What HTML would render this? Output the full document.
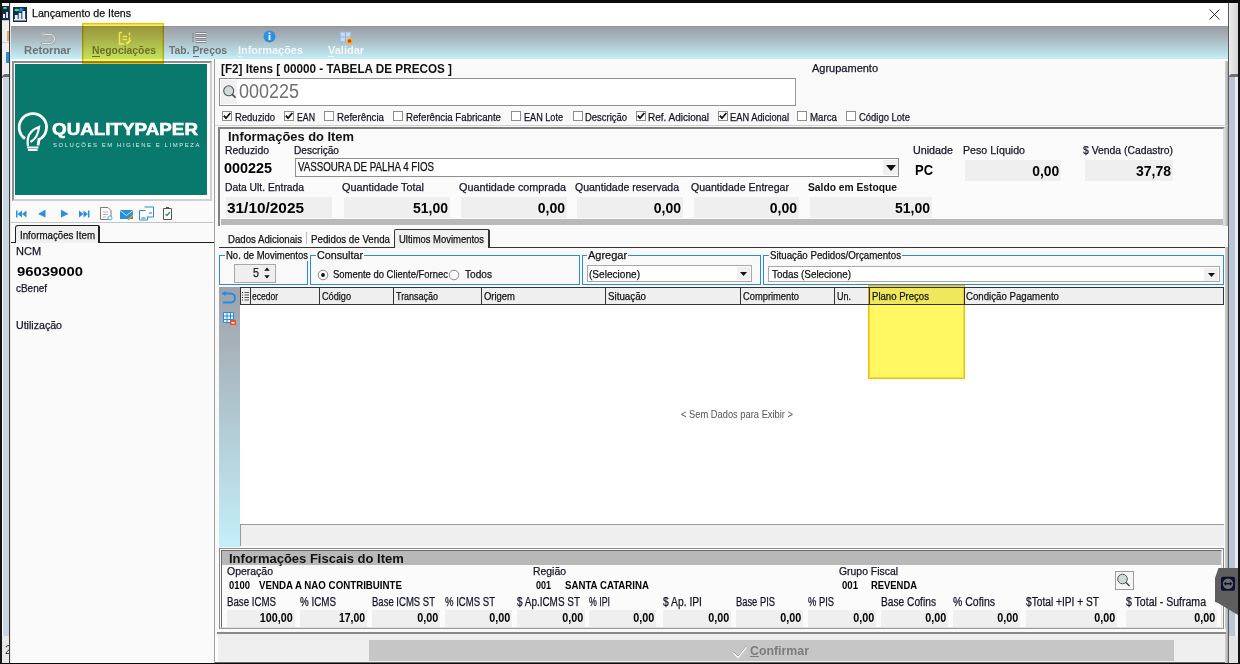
<!DOCTYPE html>
<html><head><meta charset="utf-8">
<style>
*{margin:0;padding:0;box-sizing:border-box}
html,body{width:1240px;height:664px;overflow:hidden;background:#fafafa;font-family:"Liberation Sans",sans-serif;font-size:11px}
.a{position:absolute;white-space:pre}
.s{-webkit-text-stroke:0.25px currentColor}
svg.a{overflow:visible}
</style></head><body>
<div class="a" style="left:0px;top:0px;width:1240px;height:664px;background:#f9f9f9;"></div>
<div class="a" style="left:0px;top:0px;width:1240px;height:3px;background:#0b0b0b;"></div>
<div class="a" style="left:0px;top:662px;width:1240px;height:1px;background:#6a6a6a;"></div>
<div class="a" style="left:0px;top:663px;width:1240px;height:1px;background:#0b0b0b;"></div>
<div class="a" style="left:0px;top:3px;width:2px;height:660px;background:#151515;"></div>
<div class="a" style="left:2px;top:3px;width:7px;height:72px;background:#eeeeee;"></div>
<div class="a" style="left:11px;top:661px;width:1217px;height:1px;background:#fdfdfd;"></div>
<svg class="a" style="left:2px;top:6px" width="7" height="14"><rect width="7" height="14" fill="#0d2d57"/><ellipse cx="3" cy="2" rx="2" ry="1" fill="#6fdc2c"/><rect x="1" y="8" width="2" height="4" fill="#eef"/><rect x="4" y="6" width="2" height="6" fill="#dde"/></svg>
<div class="a" style="left:2px;top:20px;width:7px;height:1px;background:#c8c8c8;"></div>
<div class="a" style="left:7px;top:31px;width:2px;height:10px;background:#e0a860;"></div>
<div class="a" style="left:2px;top:42px;width:7px;height:1px;background:#d0d0d0;"></div>
<div class="a" style="left:6px;top:52px;width:3px;height:11px;background:#2a8ad8;"></div>
<div class="a" style="left:2px;top:74px;width:7px;height:4px;background:#6a6a6a;border-top-left-radius:4px"></div>
<div class="a" style="left:3px;top:77px;width:6px;height:559px;background:#c9d5e1;"></div>
<div class="a" style="left:2px;top:636px;width:7px;height:27px;background:#e8e8e8;"></div>
<div class="a" style="left:5px;top:643px;font-size:12px;line-height:14px;color:#445">2</div>
<div class="a" style="left:9px;top:3px;width:1px;height:660px;background:#3a3a3a;"></div>
<div class="a" style="left:10px;top:3px;width:1px;height:660px;background:#e8e8e8;"></div>
<div class="a" style="left:1225px;top:59px;width:3px;height:604px;background:linear-gradient(90deg,#d6d6d6,#a8a8a8);"></div>
<div class="a" style="left:1228px;top:3px;width:1px;height:660px;background:#5a5a5a;"></div>
<div class="a" style="left:1229px;top:3px;width:9px;height:71px;background:linear-gradient(90deg,#ececec,#d6d6d6);"></div>
<div class="a" style="left:1229px;top:74px;width:9px;height:3px;background:#707070;border-top-left-radius:3px"></div>
<div class="a" style="left:1229px;top:77px;width:6px;height:559px;background:#b8c6d6;"></div>
<div class="a" style="left:1235px;top:77px;width:3px;height:559px;background:#e9edf1;"></div>
<div class="a" style="left:1229px;top:636px;width:9px;height:27px;background:#e4e4e4;"></div>
<div class="a" style="left:1238px;top:3px;width:2px;height:660px;background:#111;"></div>
<div class="a" style="left:11px;top:3px;width:1217px;height:24px;background:#ffffff;"></div>
<svg class="a" style="left:13px;top:7px" width="14" height="15" viewBox="0 0 15 15" preserveAspectRatio="none"><rect width="15" height="15" fill="#0d2d57"/><rect x="1" y="12" width="13" height="1.5" fill="#e8eef5"/><rect x="2" y="8" width="3" height="4" fill="#f3f6fa"/><rect x="6" y="6" width="3" height="6" fill="#dfe6ee"/><rect x="10" y="4" width="3" height="8" fill="#f3f6fa"/><ellipse cx="4" cy="3" rx="2.5" ry="1.2" fill="#6fdc2c"/><path d="M6 4 L9 1 L8 4 L11 2" stroke="#1e8cf0" stroke-width="1.6" fill="none"/></svg>
<svg class="a" style="left:1209px;top:9px" width="11" height="11"><path d="M0.5 0.5L10.5 10.5M10.5 0.5L0.5 10.5" stroke="#1a1a1a" stroke-width="0.9"/></svg>
<div class="a" style="left:11px;top:26px;width:1217px;height:33px;background:linear-gradient(#8f9197,#9b9ea5 4%,#a9b9c0 40%,#c3eff9);"></div>
<div class="a" style="left:11px;top:59px;width:1217px;height:2px;background:#ffffff;"></div>
<div class="a" style="left:92px;top:56px;width:8px;height:1px;background:#717171;"></div>
<div class="a" style="left:193px;top:56px;width:6px;height:1px;background:#717171;"></div>
<div class="a" style="left:238px;top:56px;width:4px;height:1px;background:#f2f7fa;"></div>
<div class="a" style="left:328px;top:56px;width:6px;height:1px;background:#f2f7fa;"></div>
<svg class="a" style="left:39px;top:31px" width="17" height="15" viewBox="0 0 17 15"><path d="M5 3.5 H11 A4.5 4.5 0 0 1 11 12.5 H2" stroke="#a8a8a8" stroke-width="2.8" fill="none"/><path d="M5 3.5 H11 A4.5 4.5 0 0 1 11 12.5 H3" stroke="#e6e6e6" stroke-width="1" fill="none"/><path d="M1 3.5 L5.5 0.5 V6.5Z" fill="#b8b8b8"/></svg>
<svg class="a" style="left:118px;top:31px" width="15" height="15" viewBox="0 0 15 15"><path d="M1.5 1.5 V13 H6 M1.5 1.5 H4" stroke="#f6f4c0" stroke-width="1.5" fill="none"/><path d="M4.5 5.5 H9 M4.5 8.5 H9 M11.5 1.5 V4.5 M11.5 6 V9" stroke="#f6f4c0" stroke-width="1.4" fill="none"/><path d="M8.5 13 L12.5 9" stroke="#f6f4c0" stroke-width="2"/></svg>
<svg class="a" style="left:191px;top:32px" width="17" height="12" viewBox="0 0 17 12"><path d="M4.5 1.5 H15.5 M4.5 5.5 H15.5 M4.5 9.5 H15.5" stroke="#777" stroke-width="2.6" fill="none"/><path d="M4.5 1.5 H15.5 M4.5 5.5 H15.5 M4.5 9.5 H15.5" stroke="#f0f0f0" stroke-width="1.2" fill="none"/><path d="M2 1 V10 M1 1.5 H2.5 M1 5.5 H2.5 M1 9.5 H2.5" stroke="#888" stroke-width="0.8"/></svg>
<svg class="a" style="left:263px;top:30px" width="13" height="13" viewBox="0 0 13 13"><circle cx="6.5" cy="6.5" r="6" fill="#2d8fe4"/><rect x="5.6" y="5" width="1.8" height="5" fill="#fff"/><rect x="5.6" y="2.5" width="1.8" height="1.6" fill="#fff"/></svg>
<svg class="a" style="left:339px;top:31px" width="15" height="14" viewBox="0 0 15 14"><path d="M1 1 H12 V11 H1Z M1 6 H12 M6.5 1 V11" stroke="#8fb8e0" stroke-width="1.2" fill="#c9d9ea"/><circle cx="10.5" cy="10" r="3" fill="#f5b800"/><circle cx="10.5" cy="10" r="1.8" fill="#e23a2a"/></svg>
<div class="a" style="left:11px;top:61px;width:203px;height:602px;background:#fafafa;"></div>
<div class="a" style="left:12px;top:61px;width:200px;height:140px;background:#ffffff;border:2px solid #8e8e8e;border-right-color:#cfcfcf;border-bottom-color:#cfcfcf;box-sizing:border-box"></div>
<div class="a" style="left:15px;top:64px;width:192px;height:131px;background:#0a796d;"></div>
<svg class="a" style="left:14px;top:110px" width="40" height="46" viewBox="0 0 40 46"><path d="M11 28.5 A13.7 13.7 0 1 1 25 29.5 L24 35.5" stroke="#fff" stroke-width="2.8" fill="none"/><path d="M14 36 Q11.5 22 25 17 Q24 28 16.5 32" stroke="#fff" stroke-width="2.3" fill="none"/><path d="M13 37.5 H24.5 M14 40 H23.5" stroke="#fff" stroke-width="1.8"/></svg>
<div class="a" style="left:214px;top:59px;width:1px;height:604px;background:#a0a0a0;"></div>
<svg class="a" style="left:15px;top:209px" width="160" height="12" viewBox="0 0 160 12"><path d="M1 1.5 H2.5 V8.5 H1Z M2.5 5 L7 1.5 V8.5Z M7 5 L11.5 1.5 V8.5Z" fill="#2f8fdc"/><path d="M23 5 L30.5 0.5 V8.5Z" fill="#2f8fdc"/><path d="M46 0.5 L53.5 5 L46 8.5Z" fill="#2f8fdc"/><path d="M64 1.5 L68.5 5 L64 8.5Z M68.5 1.5 L73 5 L68.5 8.5Z M73 1.5 H74.5 V8.5 H73Z" fill="#2f8fdc"/></svg>
<svg class="a" style="left:99px;top:206px" width="75" height="15" viewBox="0 0 75 15"><path d="M1.5 1.5 H9 L12 4.5 V13.5 H1.5Z" stroke="#7a7a7a" fill="#fbfbfb" stroke-width="1"/><path d="M4 6 H9 M4 8.5 H9 M4 11 H7" stroke="#b8b8b8"/><circle cx="11" cy="12" r="2" fill="#fff" stroke="#58a8e8"/><path d="M21 4 H34 V13 H21Z" fill="#2a8ed8"/><path d="M21 4.5 L27.5 9.5 L34 4.5" stroke="#cfe6fa" fill="none"/><path d="M29 14 L34 9" stroke="#e3a41c" stroke-width="1.6"/><path d="M40.5 4.5 H48.5 V14 H40.5Z" stroke="#2a8ad8" fill="#fff"/><path d="M45.5 1 H54.5 V11 H48.5" stroke="#2a8ad8" fill="#fff"/><path d="M42.5 12 H46.5 M50 7 H53" stroke="#2a6ab8"/><path d="M64.5 2.5 H72.5 V13.5 H64.5Z" stroke="#555" fill="#fff"/><rect x="67" y="1" width="3" height="2" fill="#555"/><path d="M66.5 8 L68 9.5 L71 6" stroke="#2a9a3a" fill="none" stroke-width="1.3"/></svg>
<div class="a" style="left:11px;top:222px;width:202px;height:1px;background:#c4c4c4;"></div>
<div class="a" style="left:15px;top:225px;width:85px;height:18px;background:#f0f0f0;border:1px solid #1e1e1e;border-bottom:none;border-right-width:2px;border-radius:3px 2px 0 0"></div>
<div class="a" style="left:11px;top:242px;width:5px;height:1px;background:#1e1e1e;"></div>
<div class="a" style="left:99px;top:242px;width:115px;height:1px;background:#1e1e1e;"></div>
<div class="a" style="left:219px;top:78px;width:577px;height:28px;background:#ffffff;border:1px solid #8f8f8f;border-right-color:#9a9a9a"></div>
<div class="a" style="left:221px;top:80px;width:16px;height:24px;background:#f0f0f0;"></div>
<svg class="a" style="left:220px;top:82px" width="18" height="18" viewBox="0 0 18 18"><circle cx="8.7" cy="8.8" r="5" stroke="#555" stroke-width="1.1" fill="#cfdada"/><path d="M12.3 12.4 L15.5 15.6" stroke="#444" stroke-width="1.5"/></svg>
<div class="a" style="left:222px;top:111px;width:10px;height:10px;background:#ffffff;border:1px solid #8d8d8d"></div>
<svg class="a" style="left:222px;top:111px" width="10" height="10" viewBox="0 0 10 10"><path d="M1.8 4.6 L4 7.2 L8.3 2" stroke="#111" stroke-width="1.8" fill="none"/></svg>
<div class="a" style="left:284px;top:111px;width:10px;height:10px;background:#ffffff;border:1px solid #8d8d8d"></div>
<svg class="a" style="left:284px;top:111px" width="10" height="10" viewBox="0 0 10 10"><path d="M1.8 4.6 L4 7.2 L8.3 2" stroke="#111" stroke-width="1.8" fill="none"/></svg>
<div class="a" style="left:324px;top:111px;width:10px;height:10px;background:#ffffff;border:1px solid #8d8d8d"></div>
<div class="a" style="left:393px;top:111px;width:10px;height:10px;background:#ffffff;border:1px solid #8d8d8d"></div>
<div class="a" style="left:511px;top:111px;width:10px;height:10px;background:#ffffff;border:1px solid #8d8d8d"></div>
<div class="a" style="left:573px;top:111px;width:10px;height:10px;background:#ffffff;border:1px solid #8d8d8d"></div>
<div class="a" style="left:636px;top:111px;width:10px;height:10px;background:#ffffff;border:1px solid #8d8d8d"></div>
<svg class="a" style="left:636px;top:111px" width="10" height="10" viewBox="0 0 10 10"><path d="M1.8 4.6 L4 7.2 L8.3 2" stroke="#111" stroke-width="1.8" fill="none"/></svg>
<div class="a" style="left:718px;top:111px;width:10px;height:10px;background:#ffffff;border:1px solid #8d8d8d"></div>
<svg class="a" style="left:718px;top:111px" width="10" height="10" viewBox="0 0 10 10"><path d="M1.8 4.6 L4 7.2 L8.3 2" stroke="#111" stroke-width="1.8" fill="none"/></svg>
<div class="a" style="left:797px;top:111px;width:10px;height:10px;background:#ffffff;border:1px solid #8d8d8d"></div>
<div class="a" style="left:846px;top:111px;width:10px;height:10px;background:#ffffff;border:1px solid #8d8d8d"></div>
<div class="a" style="left:215px;top:125px;width:1013px;height:1px;background:#d0d0d0;"></div>
<div class="a" style="left:218px;top:127px;width:1007px;height:100px;background:#fbfbfb;border:2px solid #808080;border-right-color:#dcdcdc;border-bottom:none"></div>
<div class="a" style="left:295px;top:158px;width:604px;height:19px;background:#ffffff;border:1px solid #8f8f8f"></div>
<div class="a" style="left:883px;top:160px;width:15px;height:15px;background:#f0f0f0;"></div>
<svg class="a" style="left:886px;top:165px" width="10" height="6"><path d="M0 0 H10 L5 6Z" fill="#111"/></svg>
<div class="a" style="left:965px;top:160px;width:96px;height:21px;background:#efefef;"></div>
<div class="a" style="left:1085px;top:160px;width:88px;height:21px;background:#efefef;"></div>
<div class="a" style="left:226px;top:197px;width:106px;height:21px;background:#efefef;"></div>
<div class="a" style="left:344px;top:197px;width:106px;height:21px;background:#efefef;"></div>
<div class="a" style="left:461px;top:197px;width:106px;height:21px;background:#efefef;"></div>
<div class="a" style="left:577px;top:197px;width:106px;height:21px;background:#efefef;"></div>
<div class="a" style="left:694px;top:197px;width:105px;height:21px;background:#efefef;"></div>
<div class="a" style="left:810px;top:197px;width:122px;height:21px;background:#efefef;"></div>
<div class="a" style="left:221px;top:219px;width:1002px;height:6px;background:#b9b9b9;"></div>
<div class="a" style="left:215px;top:226px;width:1013px;height:21px;background:#fafafa;"></div>
<div class="a" style="left:306px;top:232px;width:1px;height:12px;background:#bdbdbd;"></div>
<div class="a" style="left:394px;top:229px;width:96px;height:19px;background:#f0f0f0;border:1px solid #333;border-bottom:none;border-right:2px solid #333;border-radius:2px 2px 0 0"></div>
<div class="a" style="left:219px;top:247px;width:176px;height:1px;background:#333;"></div>
<div class="a" style="left:489px;top:247px;width:736px;height:1px;background:#333;"></div>
<div class="a" style="left:219px;top:255px;width:89px;height:30px;background:transparent;border:1px solid #2b89e4"></div>
<div class="a" style="left:225px;top:249px;width:84px;height:12px;background:#fafafa;"></div>
<div class="a" style="left:310px;top:255px;width:270px;height:30px;background:transparent;border:1px solid #2b89e4"></div>
<div class="a" style="left:316px;top:249px;width:48px;height:12px;background:#fafafa;"></div>
<div class="a" style="left:582px;top:255px;width:179px;height:30px;background:transparent;border:1px solid #2b89e4"></div>
<div class="a" style="left:587px;top:249px;width:41px;height:12px;background:#fafafa;"></div>
<div class="a" style="left:763px;top:255px;width:461px;height:30px;background:transparent;border:1px solid #2b89e4"></div>
<div class="a" style="left:769px;top:249px;width:133px;height:12px;background:#fafafa;"></div>
<div class="a" style="left:234px;top:264px;width:42px;height:19px;background:#efefef;border:1px solid #a9a9a9"></div>
<svg class="a" style="left:264px;top:267px" width="6" height="12"><path d="M0.3 3.8 L3 0.6 L5.7 3.8Z M0.3 8.3 L3 11.5 L5.7 8.3Z" fill="#111"/></svg>
<svg class="a" style="left:316.5px;top:268.5px" width="12" height="12"><circle cx="6" cy="6" r="4.8" fill="#fbfbfb" stroke="#8a8a8a"/><circle cx="6" cy="6" r="1.9" fill="#111"/></svg>
<svg class="a" style="left:447.5px;top:268.5px" width="12" height="12"><circle cx="6" cy="6" r="4.8" fill="#fbfbfb" stroke="#8a8a8a"/></svg>
<div class="a" style="left:587px;top:265px;width:165px;height:17px;background:#ffffff;border:1px solid #a9a9a9"></div>
<div class="a" style="left:737px;top:267px;width:13px;height:13px;background:#efefef;"></div>
<svg class="a" style="left:740px;top:272px" width="7" height="4"><path d="M0 0 H7 L3.5 4Z" fill="#111"/></svg>
<div class="a" style="left:768px;top:266px;width:452px;height:16px;background:#ffffff;border:1px solid #a9a9a9"></div>
<div class="a" style="left:1204px;top:268px;width:14px;height:13px;background:#efefef;"></div>
<svg class="a" style="left:1208px;top:273px" width="7" height="4"><path d="M0 0 H7 L3.5 4Z" fill="#111"/></svg>
<div class="a" style="left:219px;top:287px;width:21px;height:260px;background:linear-gradient(#9ea1a8,#c3eff9);"></div>
<div class="a" style="left:240px;top:287px;width:984px;height:18px;background:#efefef;border-top:1px solid #333;border-bottom:1px solid #333"></div>
<div class="a" style="left:240px;top:305px;width:984px;height:219px;background:#ffffff;"></div>
<div class="a" style="left:240px;top:524px;width:984px;height:22px;background:#efefef;border-top:1px solid #9a9a9a;border-left:1px solid #9a9a9a"></div>
<div class="a" style="left:240px;top:288px;width:1px;height:16px;background:#333;"></div>
<div class="a" style="left:250px;top:288px;width:1px;height:16px;background:#333;"></div>
<div class="a" style="left:319px;top:288px;width:1px;height:16px;background:#333;"></div>
<div class="a" style="left:393px;top:288px;width:1px;height:16px;background:#333;"></div>
<div class="a" style="left:481px;top:288px;width:1px;height:16px;background:#333;"></div>
<div class="a" style="left:605px;top:288px;width:1px;height:16px;background:#333;"></div>
<div class="a" style="left:740px;top:288px;width:1px;height:16px;background:#333;"></div>
<div class="a" style="left:834px;top:288px;width:1px;height:16px;background:#333;"></div>
<div class="a" style="left:869px;top:288px;width:1px;height:16px;background:#333;"></div>
<div class="a" style="left:964px;top:288px;width:1px;height:16px;background:#333;"></div>
<div class="a" style="left:1223px;top:288px;width:1px;height:16px;background:#333;"></div>
<svg class="a" style="left:242px;top:291px" width="8" height="10"><path d="M0 1.5 H1 M0 4 H1 M0 6.5 H1 M0 9 H1" stroke="#222"/><path d="M2.5 1.5 H7 M2.5 4 H7 M2.5 6.5 H7 M2.5 9 H7" stroke="#555"/></svg>
<svg class="a" style="left:221px;top:291px" width="15" height="13" viewBox="0 0 15 13"><path d="M4 2.5 H9.5 A4.5 4.5 0 0 1 9.5 11.5 H2" stroke="#1a8fea" stroke-width="2" fill="none"/><path d="M0.5 2.5 L4.5 0 V5Z" fill="#1a8fea"/></svg>
<svg class="a" style="left:223px;top:312px" width="14" height="14" viewBox="0 0 14 14"><path d="M0.5 0.5 H10.5 V10.5 H0.5Z M0.5 4 H10.5 M0.5 7.5 H10.5 M4 0.5 V10.5 M7.5 0.5 V10.5" stroke="#2a8ae0" fill="#eaf4fc"/><rect x="7" y="8" width="6" height="5" fill="#e8502a"/><rect x="8.5" y="10" width="3" height="1.5" fill="#fff"/></svg>
<div class="a" style="left:219px;top:548px;width:1005px;height:81px;background:#fbfbfb;border:1px solid #8a8a8a;border-bottom-color:#9a9a9a"></div>
<div class="a" style="left:221px;top:550px;width:1001px;height:78px;background:transparent;border:1px solid #6a6a6a;border-right-color:#e0e0e0;border-bottom-color:#e0e0e0"></div>
<div class="a" style="left:222px;top:551px;width:999px;height:14px;background:#b8b8b8;"></div>
<div class="a" style="left:1115px;top:571px;width:19px;height:19px;background:#f6f6f6;border:1px solid #9c9c9c"></div>
<svg class="a" style="left:1115px;top:571px" width="19" height="19" viewBox="0 0 19 19"><circle cx="7.5" cy="8" r="4.8" stroke="#555" stroke-width="1" fill="#cfdada"/><path d="M11 11.5 L14.5 15" stroke="#444" stroke-width="1.4"/></svg>
<div class="a" style="left:227px;top:610px;width:68px;height:17px;background:#efefef;"></div>
<div class="a" style="left:300px;top:610px;width:67px;height:17px;background:#efefef;"></div>
<div class="a" style="left:372px;top:610px;width:68px;height:17px;background:#efefef;"></div>
<div class="a" style="left:445px;top:610px;width:67px;height:17px;background:#efefef;"></div>
<div class="a" style="left:517px;top:610px;width:68px;height:17px;background:#efefef;"></div>
<div class="a" style="left:589px;top:610px;width:67px;height:17px;background:#efefef;"></div>
<div class="a" style="left:663px;top:610px;width:68px;height:17px;background:#efefef;"></div>
<div class="a" style="left:736px;top:610px;width:67px;height:17px;background:#efefef;"></div>
<div class="a" style="left:808px;top:610px;width:68px;height:17px;background:#efefef;"></div>
<div class="a" style="left:881px;top:610px;width:67px;height:17px;background:#efefef;"></div>
<div class="a" style="left:953px;top:610px;width:67px;height:17px;background:#efefef;"></div>
<div class="a" style="left:1026px;top:610px;width:91px;height:17px;background:#efefef;"></div>
<div class="a" style="left:1126px;top:610px;width:91px;height:17px;background:#efefef;"></div>
<div class="a" style="left:217px;top:629px;width:1009px;height:3px;background:#fafafa;"></div>
<div class="a" style="left:217px;top:632px;width:1009px;height:2px;background:#8a8a8a;"></div>
<div class="a" style="left:215px;top:634px;width:3px;height:28px;background:#ffffff;"></div>
<div class="a" style="left:218px;top:634px;width:1007px;height:28px;background:#efefef;"></div>
<div class="a" style="left:369px;top:640px;width:805px;height:21px;background:#c6c6c6;"></div>
<svg class="a" style="left:733px;top:644px" width="14" height="14" viewBox="0 0 14 14"><path d="M1 9 L5 13 L13 3" stroke="#f4f4f4" stroke-width="2.4" fill="none"/><path d="M1 8 L5 12 L13 2" stroke="#9a9a9a" stroke-width="1" fill="none"/></svg>
<div class="a" style="left:750px;top:656px;width:9px;height:1px;background:#7c7c7c;"></div>
<svg class="a" style="left:1215px;top:568px" width="23" height="48" viewBox="0 0 23 48"><path d="M0 10 L3.5 0 H23 V47 L3 35 L0 34Z" fill="#5e5e5e"/><rect x="6" y="8.7" width="14" height="14" rx="2" fill="#0b1030"/><circle cx="13" cy="15.7" r="5.2" fill="#707070"/><path d="M10.5 15.7 H15.5" stroke="#0b1030" stroke-width="1.4"/><path d="M8.6 15.7 L11.2 13.6 V17.8Z M17.4 15.7 L14.8 13.6 V17.8Z" fill="#0b1030"/></svg>
<div class="a s" style="left:32.00px;top:8.49px;font-family:'Liberation Sans',sans-serif;font-size:11px;line-height:11px;color:#111;transform:scaleX(0.9635);transform-origin:left;">Lançamento de Itens</div>
<div class="a" style="left:24.00px;top:45.29px;font-family:'Liberation Sans',sans-serif;font-size:11px;line-height:11px;font-weight:bold;color:#717171;transform:scaleX(1.0252);transform-origin:left;">Retornar</div>
<div class="a" style="left:92.00px;top:45.29px;font-family:'Liberation Sans',sans-serif;font-size:11px;line-height:11px;font-weight:bold;color:#717171;transform:scaleX(0.9429);transform-origin:left;">Negociações</div>
<div class="a" style="left:169.00px;top:45.29px;font-family:'Liberation Sans',sans-serif;font-size:11px;line-height:11px;font-weight:bold;color:#717171;transform:scaleX(0.9424);transform-origin:left;">Tab. Preços</div>
<div class="a" style="left:238.00px;top:45.29px;font-family:'Liberation Sans',sans-serif;font-size:11px;line-height:11px;font-weight:bold;color:#f2f7fa;transform:scaleX(0.9936);transform-origin:left;">Informações</div>
<div class="a" style="left:328.00px;top:45.29px;font-family:'Liberation Sans',sans-serif;font-size:11px;line-height:11px;font-weight:bold;color:#f2f7fa;">Validar</div>
<div class="a" style="left:52.00px;top:120.91px;font-family:'Liberation Sans',sans-serif;font-size:17px;line-height:17px;font-weight:bold;color:#ffffff;transform:scaleX(1.1067);transform-origin:left;-webkit-text-stroke:0.6px #fff;">QUALITYPAPER</div>
<div class="a" style="left:53.00px;top:142.42px;font-family:'Liberation Sans',sans-serif;font-size:6px;line-height:6px;color:#d8ece9;transform:scaleX(0.9882);transform-origin:left;letter-spacing:1.6px;">SOLUÇÕES EM HIGIENE E LIMPEZA</div>
<div class="a s" style="left:20.00px;top:229.69px;font-family:'Liberation Sans',sans-serif;font-size:11px;line-height:11px;color:#111;transform:scaleX(0.8825);transform-origin:left;">Informações Item</div>
<div class="a s" style="left:16.00px;top:245.69px;font-family:'Liberation Sans',sans-serif;font-size:11px;line-height:11px;color:#141428;">NCM</div>
<div class="a" style="left:17.00px;top:264.99px;font-family:'Liberation Sans',sans-serif;font-size:13px;line-height:13px;font-weight:bold;color:#000;transform:scaleX(1.1410);transform-origin:left;">96039000</div>
<div class="a s" style="left:16.00px;top:282.69px;font-family:'Liberation Sans',sans-serif;font-size:11px;line-height:11px;color:#141428;transform:scaleX(0.9051);transform-origin:left;">cBenef</div>
<div class="a s" style="left:16.00px;top:319.69px;font-family:'Liberation Sans',sans-serif;font-size:11px;line-height:11px;color:#141428;transform:scaleX(0.9646);transform-origin:left;">Utilização</div>
<div class="a" style="left:221.00px;top:63.34px;font-family:'Liberation Sans',sans-serif;font-size:12px;line-height:12px;font-weight:bold;color:#111;transform:scaleX(0.9758);transform-origin:left;">[F2] Itens [ 00000 - TABELA DE PRECOS ]</div>
<div class="a s" style="left:812.00px;top:63.19px;font-family:'Liberation Sans',sans-serif;font-size:11px;line-height:11px;color:#141428;">Agrupamento</div>
<div class="a" style="left:239.00px;top:81.44px;font-family:'Liberation Sans',sans-serif;font-size:20.5px;line-height:20.5px;color:#707070;transform:scaleX(0.8769);transform-origin:left;">000225</div>
<div class="a s" style="left:235.00px;top:111.69px;font-family:'Liberation Sans',sans-serif;font-size:11px;line-height:11px;color:#141428;transform:scaleX(0.8605);transform-origin:left;">Reduzido</div>
<div class="a s" style="left:297.00px;top:111.69px;font-family:'Liberation Sans',sans-serif;font-size:11px;line-height:11px;color:#141428;transform:scaleX(0.7956);transform-origin:left;">EAN</div>
<div class="a s" style="left:337.00px;top:111.69px;font-family:'Liberation Sans',sans-serif;font-size:11px;line-height:11px;color:#141428;transform:scaleX(0.8834);transform-origin:left;">Referência</div>
<div class="a s" style="left:406.00px;top:111.69px;font-family:'Liberation Sans',sans-serif;font-size:11px;line-height:11px;color:#141428;transform:scaleX(0.8777);transform-origin:left;">Referência Fabricante</div>
<div class="a s" style="left:524.00px;top:111.69px;font-family:'Liberation Sans',sans-serif;font-size:11px;line-height:11px;color:#141428;transform:scaleX(0.8281);transform-origin:left;">EAN Lote</div>
<div class="a s" style="left:585.00px;top:111.69px;font-family:'Liberation Sans',sans-serif;font-size:11px;line-height:11px;color:#141428;transform:scaleX(0.8588);transform-origin:left;">Descrição</div>
<div class="a s" style="left:648.00px;top:111.69px;font-family:'Liberation Sans',sans-serif;font-size:11px;line-height:11px;color:#141428;transform:scaleX(0.9069);transform-origin:left;">Ref. Adicional</div>
<div class="a s" style="left:730.00px;top:111.69px;font-family:'Liberation Sans',sans-serif;font-size:11px;line-height:11px;color:#141428;transform:scaleX(0.8463);transform-origin:left;">EAN Adicional</div>
<div class="a s" style="left:810.00px;top:111.69px;font-family:'Liberation Sans',sans-serif;font-size:11px;line-height:11px;color:#141428;transform:scaleX(0.8834);transform-origin:left;">Marca</div>
<div class="a s" style="left:859.00px;top:111.69px;font-family:'Liberation Sans',sans-serif;font-size:11px;line-height:11px;color:#141428;transform:scaleX(0.8596);transform-origin:left;">Código Lote</div>
<div class="a" style="left:228.00px;top:129.99px;font-family:'Liberation Sans',sans-serif;font-size:13px;line-height:13px;font-weight:bold;color:#111;transform:scaleX(0.9910);transform-origin:left;">Informações do Item</div>
<div class="a s" style="left:225.00px;top:144.69px;font-family:'Liberation Sans',sans-serif;font-size:11px;line-height:11px;color:#141428;transform:scaleX(0.9466);transform-origin:left;">Reduzido</div>
<div class="a s" style="left:294.00px;top:144.69px;font-family:'Liberation Sans',sans-serif;font-size:11px;line-height:11px;color:#141428;transform:scaleX(0.9201);transform-origin:left;">Descrição</div>
<div class="a" style="left:224.00px;top:161.15px;font-family:'Liberation Sans',sans-serif;font-size:14px;line-height:14px;font-weight:bold;color:#000;transform:scaleX(1.0274);transform-origin:left;">000225</div>
<div class="a s" style="left:298.00px;top:160.84px;font-family:'Liberation Sans',sans-serif;font-size:12px;line-height:12px;color:#111;transform:scaleX(0.8113);transform-origin:left;">VASSOURA DE PALHA 4 FIOS</div>
<div class="a s" style="left:913.00px;top:144.69px;font-family:'Liberation Sans',sans-serif;font-size:11px;line-height:11px;color:#141428;transform:scaleX(0.9760);transform-origin:left;">Unidade</div>
<div class="a s" style="left:963.00px;top:144.69px;font-family:'Liberation Sans',sans-serif;font-size:11px;line-height:11px;color:#141428;transform:scaleX(0.9655);transform-origin:left;">Peso Líquido</div>
<div class="a s" style="left:1083.00px;top:144.69px;font-family:'Liberation Sans',sans-serif;font-size:11px;line-height:11px;color:#141428;transform:scaleX(0.9435);transform-origin:left;">$ Venda (Cadastro)</div>
<div class="a" style="left:915.00px;top:163.15px;font-family:'Liberation Sans',sans-serif;font-size:14px;line-height:14px;font-weight:bold;color:#000;transform:scaleX(0.9253);transform-origin:left;">PC</div>
<div class="a" style="left:1031.75px;top:164.15px;font-family:'Liberation Sans',sans-serif;font-size:14px;line-height:14px;font-weight:bold;color:#000;transform:scaleX(0.9908);transform-origin:right;">0,00</div>
<div class="a" style="left:1135.95px;top:164.15px;font-family:'Liberation Sans',sans-serif;font-size:14px;line-height:14px;font-weight:bold;color:#000;">37,78</div>
<div class="a s" style="left:225.00px;top:181.69px;font-family:'Liberation Sans',sans-serif;font-size:11px;line-height:11px;color:#141428;transform:scaleX(0.9363);transform-origin:left;">Data Ult. Entrada</div>
<div class="a s" style="left:342.00px;top:181.69px;font-family:'Liberation Sans',sans-serif;font-size:11px;line-height:11px;color:#141428;transform:scaleX(0.9881);transform-origin:left;">Quantidade Total</div>
<div class="a s" style="left:459.00px;top:181.69px;font-family:'Liberation Sans',sans-serif;font-size:11px;line-height:11px;color:#141428;transform:scaleX(0.9829);transform-origin:left;">Quantidade comprada</div>
<div class="a s" style="left:575.00px;top:181.69px;font-family:'Liberation Sans',sans-serif;font-size:11px;line-height:11px;color:#141428;transform:scaleX(0.9554);transform-origin:left;">Quantidade reservada</div>
<div class="a s" style="left:691.00px;top:181.69px;font-family:'Liberation Sans',sans-serif;font-size:11px;line-height:11px;color:#141428;transform:scaleX(0.9595);transform-origin:left;">Quantidade Entregar</div>
<div class="a" style="left:808.00px;top:181.69px;font-family:'Liberation Sans',sans-serif;font-size:11px;line-height:11px;font-weight:bold;color:#111;transform:scaleX(0.9333);transform-origin:left;">Saldo em Estoque</div>
<div class="a" style="left:227.00px;top:200.65px;font-family:'Liberation Sans',sans-serif;font-size:14px;line-height:14px;font-weight:bold;color:#000;transform:scaleX(1.0988);transform-origin:left;">31/10/2025</div>
<div class="a" style="left:412.95px;top:200.95px;font-family:'Liberation Sans',sans-serif;font-size:14px;line-height:14px;font-weight:bold;color:#000;">51,00</div>
<div class="a" style="left:537.75px;top:200.95px;font-family:'Liberation Sans',sans-serif;font-size:14px;line-height:14px;font-weight:bold;color:#000;">0,00</div>
<div class="a" style="left:653.75px;top:200.95px;font-family:'Liberation Sans',sans-serif;font-size:14px;line-height:14px;font-weight:bold;color:#000;">0,00</div>
<div class="a" style="left:769.75px;top:200.95px;font-family:'Liberation Sans',sans-serif;font-size:14px;line-height:14px;font-weight:bold;color:#000;">0,00</div>
<div class="a" style="left:894.95px;top:200.95px;font-family:'Liberation Sans',sans-serif;font-size:14px;line-height:14px;font-weight:bold;color:#000;">51,00</div>
<div class="a s" style="left:228.00px;top:233.69px;font-family:'Liberation Sans',sans-serif;font-size:11px;line-height:11px;color:#111;transform:scaleX(0.8769);transform-origin:left;">Dados Adicionais</div>
<div class="a s" style="left:311.00px;top:233.69px;font-family:'Liberation Sans',sans-serif;font-size:11px;line-height:11px;color:#111;transform:scaleX(0.8845);transform-origin:left;">Pedidos de Venda</div>
<div class="a s" style="left:399.00px;top:233.69px;font-family:'Liberation Sans',sans-serif;font-size:11px;line-height:11px;color:#111;transform:scaleX(0.8583);transform-origin:left;">Ultimos Movimentos</div>
<div class="a s" style="left:226.00px;top:249.69px;font-family:'Liberation Sans',sans-serif;font-size:11px;line-height:11px;color:#111;transform:scaleX(0.8653);transform-origin:left;">No. de Movimentos</div>
<div class="a s" style="left:317.00px;top:249.69px;font-family:'Liberation Sans',sans-serif;font-size:11px;line-height:11px;color:#111;transform:scaleX(0.9771);transform-origin:left;">Consultar</div>
<div class="a s" style="left:588.00px;top:249.69px;font-family:'Liberation Sans',sans-serif;font-size:11px;line-height:11px;color:#111;">Agregar</div>
<div class="a s" style="left:770.00px;top:249.69px;font-family:'Liberation Sans',sans-serif;font-size:11px;line-height:11px;color:#111;transform:scaleX(0.8816);transform-origin:left;">Situação Pedidos/Orçamentos</div>
<div class="a s" style="left:253.00px;top:266.84px;font-family:'Liberation Sans',sans-serif;font-size:12px;line-height:12px;color:#222;transform:scaleX(0.8972);transform-origin:left;">5</div>
<div class="a s" style="left:333.00px;top:268.69px;font-family:'Liberation Sans',sans-serif;font-size:11px;line-height:11px;color:#111;transform:scaleX(0.8587);transform-origin:left;">Somente do Cliente/Fornec</div>
<div class="a s" style="left:465.00px;top:268.69px;font-family:'Liberation Sans',sans-serif;font-size:11px;line-height:11px;color:#111;transform:scaleX(0.9196);transform-origin:left;">Todos</div>
<div class="a s" style="left:589.00px;top:268.69px;font-family:'Liberation Sans',sans-serif;font-size:11px;line-height:11px;color:#111;transform:scaleX(0.9166);transform-origin:left;">(Selecione)</div>
<div class="a s" style="left:772.00px;top:268.69px;font-family:'Liberation Sans',sans-serif;font-size:11px;line-height:11px;color:#111;transform:scaleX(0.8971);transform-origin:left;">Todas (Selecione)</div>
<div class="a s" style="left:252.00px;top:290.69px;font-family:'Liberation Sans',sans-serif;font-size:11px;line-height:11px;color:#111;transform:scaleX(0.7729);transform-origin:left;">ecedor</div>
<div class="a s" style="left:322.00px;top:290.69px;font-family:'Liberation Sans',sans-serif;font-size:11px;line-height:11px;color:#111;transform:scaleX(0.8319);transform-origin:left;">Código</div>
<div class="a s" style="left:396.00px;top:290.69px;font-family:'Liberation Sans',sans-serif;font-size:11px;line-height:11px;color:#111;transform:scaleX(0.8145);transform-origin:left;">Transação</div>
<div class="a s" style="left:484.00px;top:290.69px;font-family:'Liberation Sans',sans-serif;font-size:11px;line-height:11px;color:#111;transform:scaleX(0.8596);transform-origin:left;">Origem</div>
<div class="a s" style="left:608.00px;top:290.69px;font-family:'Liberation Sans',sans-serif;font-size:11px;line-height:11px;color:#111;transform:scaleX(0.8876);transform-origin:left;">Situação</div>
<div class="a s" style="left:743.00px;top:290.69px;font-family:'Liberation Sans',sans-serif;font-size:11px;line-height:11px;color:#111;transform:scaleX(0.8481);transform-origin:left;">Comprimento</div>
<div class="a s" style="left:837.00px;top:290.69px;font-family:'Liberation Sans',sans-serif;font-size:11px;line-height:11px;color:#111;transform:scaleX(0.8175);transform-origin:left;">Un.</div>
<div class="a s" style="left:872.00px;top:290.69px;font-family:'Liberation Sans',sans-serif;font-size:11px;line-height:11px;color:#111;transform:scaleX(0.8711);transform-origin:left;">Plano Preços</div>
<div class="a s" style="left:966.00px;top:290.69px;font-family:'Liberation Sans',sans-serif;font-size:11px;line-height:11px;color:#111;transform:scaleX(0.8790);transform-origin:left;">Condição Pagamento</div>
<div class="a" style="left:681.00px;top:408.69px;font-family:'Liberation Sans',sans-serif;font-size:11px;line-height:11px;color:#555;transform:scaleX(0.8480);transform-origin:left;">&lt; Sem Dados para Exibir &gt;</div>
<div class="a" style="left:229.00px;top:551.99px;font-family:'Liberation Sans',sans-serif;font-size:13px;line-height:13px;font-weight:bold;color:#111;">Informações Fiscais do Item</div>
<div class="a s" style="left:227.00px;top:565.69px;font-family:'Liberation Sans',sans-serif;font-size:11px;line-height:11px;color:#141428;transform:scaleX(0.9521);transform-origin:left;">Operação</div>
<div class="a s" style="left:533.00px;top:565.69px;font-family:'Liberation Sans',sans-serif;font-size:11px;line-height:11px;color:#141428;transform:scaleX(0.9467);transform-origin:left;">Região</div>
<div class="a s" style="left:839.00px;top:565.69px;font-family:'Liberation Sans',sans-serif;font-size:11px;line-height:11px;color:#141428;transform:scaleX(0.9461);transform-origin:left;">Grupo Fiscal</div>
<div class="a" style="left:229.00px;top:579.69px;font-family:'Liberation Sans',sans-serif;font-size:11px;line-height:11px;font-weight:bold;color:#000;transform:scaleX(0.8577);transform-origin:left;">0100</div>
<div class="a" style="left:259.00px;top:579.69px;font-family:'Liberation Sans',sans-serif;font-size:11px;line-height:11px;font-weight:bold;color:#000;transform:scaleX(0.8830);transform-origin:left;">VENDA A NAO CONTRIBUINTE</div>
<div class="a" style="left:536.00px;top:579.69px;font-family:'Liberation Sans',sans-serif;font-size:11px;line-height:11px;font-weight:bold;color:#000;transform:scaleX(0.8170);transform-origin:left;">001</div>
<div class="a" style="left:564.50px;top:579.69px;font-family:'Liberation Sans',sans-serif;font-size:11px;line-height:11px;font-weight:bold;color:#000;transform:scaleX(0.8793);transform-origin:left;">SANTA CATARINA</div>
<div class="a" style="left:842.00px;top:579.69px;font-family:'Liberation Sans',sans-serif;font-size:11px;line-height:11px;font-weight:bold;color:#000;transform:scaleX(0.8715);transform-origin:left;">001</div>
<div class="a" style="left:871.00px;top:579.69px;font-family:'Liberation Sans',sans-serif;font-size:11px;line-height:11px;font-weight:bold;color:#000;transform:scaleX(0.8551);transform-origin:left;">REVENDA</div>
<div class="a s" style="left:227.00px;top:595.54px;font-family:'Liberation Sans',sans-serif;font-size:12px;line-height:12px;color:#141428;transform:scaleX(0.8074);transform-origin:left;">Base ICMS</div>
<div class="a" style="left:256.30px;top:611.84px;font-family:'Liberation Sans',sans-serif;font-size:12px;line-height:12px;font-weight:bold;color:#000;transform:scaleX(0.8991);transform-origin:right;">100,00</div>
<div class="a s" style="left:300.00px;top:595.54px;font-family:'Liberation Sans',sans-serif;font-size:12px;line-height:12px;color:#141428;transform:scaleX(0.8179);transform-origin:left;">% ICMS</div>
<div class="a" style="left:334.97px;top:611.84px;font-family:'Liberation Sans',sans-serif;font-size:12px;line-height:12px;font-weight:bold;color:#000;transform:scaleX(0.8658);transform-origin:right;">17,00</div>
<div class="a s" style="left:372.00px;top:595.54px;font-family:'Liberation Sans',sans-serif;font-size:12px;line-height:12px;color:#141428;transform:scaleX(0.7939);transform-origin:left;">Base ICMS ST</div>
<div class="a" style="left:414.64px;top:611.84px;font-family:'Liberation Sans',sans-serif;font-size:12px;line-height:12px;font-weight:bold;color:#000;transform:scaleX(0.8990);transform-origin:right;">0,00</div>
<div class="a s" style="left:445.00px;top:595.54px;font-family:'Liberation Sans',sans-serif;font-size:12px;line-height:12px;color:#141428;transform:scaleX(0.7978);transform-origin:left;">% ICMS ST</div>
<div class="a" style="left:486.64px;top:611.84px;font-family:'Liberation Sans',sans-serif;font-size:12px;line-height:12px;font-weight:bold;color:#000;transform:scaleX(0.8990);transform-origin:right;">0,00</div>
<div class="a s" style="left:517.00px;top:595.54px;font-family:'Liberation Sans',sans-serif;font-size:12px;line-height:12px;color:#141428;transform:scaleX(0.8286);transform-origin:left;">$ Ap.ICMS ST</div>
<div class="a" style="left:559.64px;top:611.84px;font-family:'Liberation Sans',sans-serif;font-size:12px;line-height:12px;font-weight:bold;color:#000;transform:scaleX(0.8990);transform-origin:right;">0,00</div>
<div class="a s" style="left:589.00px;top:595.54px;font-family:'Liberation Sans',sans-serif;font-size:12px;line-height:12px;color:#141428;transform:scaleX(0.7320);transform-origin:left;">% IPI</div>
<div class="a" style="left:630.64px;top:611.84px;font-family:'Liberation Sans',sans-serif;font-size:12px;line-height:12px;font-weight:bold;color:#000;transform:scaleX(0.8990);transform-origin:right;">0,00</div>
<div class="a s" style="left:663.00px;top:595.54px;font-family:'Liberation Sans',sans-serif;font-size:12px;line-height:12px;color:#141428;transform:scaleX(0.8595);transform-origin:left;">$ Ap. IPI</div>
<div class="a" style="left:705.64px;top:611.84px;font-family:'Liberation Sans',sans-serif;font-size:12px;line-height:12px;font-weight:bold;color:#000;transform:scaleX(0.8990);transform-origin:right;">0,00</div>
<div class="a s" style="left:736.00px;top:595.54px;font-family:'Liberation Sans',sans-serif;font-size:12px;line-height:12px;color:#141428;transform:scaleX(0.7795);transform-origin:left;">Base PIS</div>
<div class="a" style="left:777.64px;top:611.84px;font-family:'Liberation Sans',sans-serif;font-size:12px;line-height:12px;font-weight:bold;color:#000;transform:scaleX(0.8990);transform-origin:right;">0,00</div>
<div class="a s" style="left:808.00px;top:595.54px;font-family:'Liberation Sans',sans-serif;font-size:12px;line-height:12px;color:#141428;transform:scaleX(0.7794);transform-origin:left;">% PIS</div>
<div class="a" style="left:850.64px;top:611.84px;font-family:'Liberation Sans',sans-serif;font-size:12px;line-height:12px;font-weight:bold;color:#000;transform:scaleX(0.8990);transform-origin:right;">0,00</div>
<div class="a s" style="left:881.00px;top:595.54px;font-family:'Liberation Sans',sans-serif;font-size:12px;line-height:12px;color:#141428;transform:scaleX(0.8500);transform-origin:left;">Base Cofins</div>
<div class="a" style="left:922.64px;top:611.84px;font-family:'Liberation Sans',sans-serif;font-size:12px;line-height:12px;font-weight:bold;color:#000;transform:scaleX(0.8990);transform-origin:right;">0,00</div>
<div class="a s" style="left:953.00px;top:595.54px;font-family:'Liberation Sans',sans-serif;font-size:12px;line-height:12px;color:#141428;transform:scaleX(0.8744);transform-origin:left;">% Cofins</div>
<div class="a" style="left:994.64px;top:611.84px;font-family:'Liberation Sans',sans-serif;font-size:12px;line-height:12px;font-weight:bold;color:#000;transform:scaleX(0.8990);transform-origin:right;">0,00</div>
<div class="a s" style="left:1026.00px;top:595.54px;font-family:'Liberation Sans',sans-serif;font-size:12px;line-height:12px;color:#141428;transform:scaleX(0.8484);transform-origin:left;">$Total +IPI + ST</div>
<div class="a" style="left:1091.64px;top:611.84px;font-family:'Liberation Sans',sans-serif;font-size:12px;line-height:12px;font-weight:bold;color:#000;transform:scaleX(0.8990);transform-origin:right;">0,00</div>
<div class="a s" style="left:1126.00px;top:595.54px;font-family:'Liberation Sans',sans-serif;font-size:12px;line-height:12px;color:#141428;transform:scaleX(0.8776);transform-origin:left;">$ Total - Suframa</div>
<div class="a" style="left:1191.64px;top:611.84px;font-family:'Liberation Sans',sans-serif;font-size:12px;line-height:12px;font-weight:bold;color:#000;transform:scaleX(0.8990);transform-origin:right;">0,00</div>
<div class="a" style="left:750.00px;top:644.84px;font-family:'Liberation Sans',sans-serif;font-size:12px;line-height:12px;font-weight:bold;color:#7c7c7c;transform:scaleX(1.0289);transform-origin:left;">Confirmar</div>
<div class="a" style="left:82px;top:23px;width:82px;height:41px;border:1px solid #f0c000;box-shadow:inset 0 0 0 1px #fad838;background:#fdf45e;mix-blend-mode:multiply"></div>
<div class="a" style="left:868px;top:285px;width:97px;height:94px;border:1px solid #f0c000;box-shadow:inset 0 0 0 1px #fad838;background:#fff862;mix-blend-mode:multiply"></div>
</body></html>
